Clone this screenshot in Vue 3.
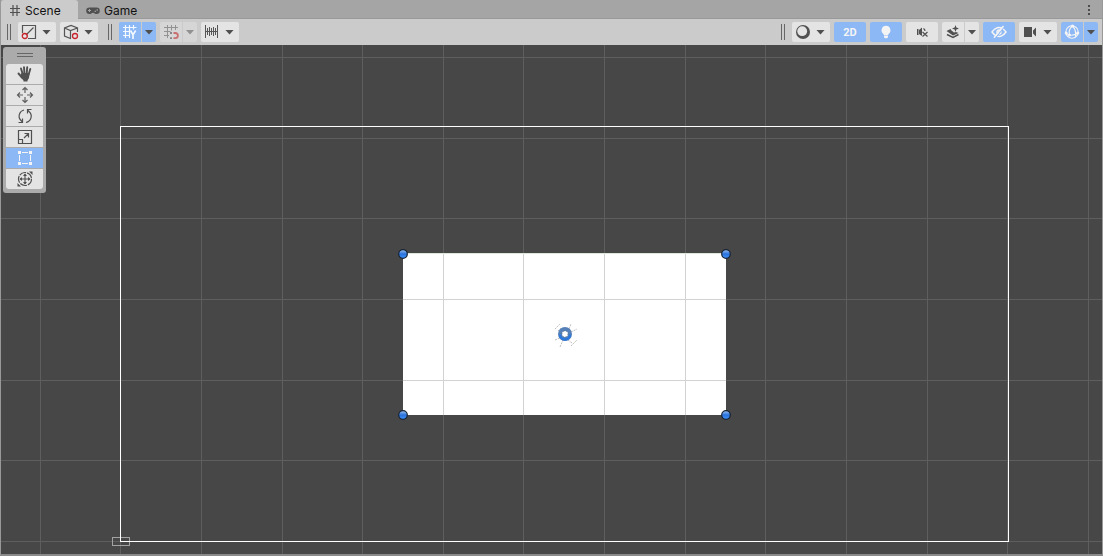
<script setup>
import { ref } from 'vue'

const activeTool = ref('rect')
const tools = [
  { id: 'hand', label: 'View Tool' },
  { id: 'move', label: 'Move Tool' },
  { id: 'rotate', label: 'Rotate Tool' },
  { id: 'scale', label: 'Scale Tool' },
  { id: 'rect', label: 'Rect Tool' },
  { id: 'transform', label: 'Transform Tool' }
]
const columns = [40, 120, 201, 282, 362, 443, 523, 604, 685, 765, 846, 927, 1007, 1088]
const rows = [57, 138, 218, 299, 380, 460, 541]
const handles = [[403, 254], [726, 254], [403, 415], [726, 415]]
</script>

<template>
  <div class="window">
    <header class="tabs">
      <button class="tab current" type="button">
        <svg class="tab-icon" viewBox="0 0 12 12"><path d="M4 0v11M8 0v11M1 3.500h10M1 7.500h10" fill="none" stroke="#505050" stroke-width="1.200" /></svg>
        Scene
      </button>
      <button class="tab" type="button">
        <svg class="pad-icon" viewBox="0 0 14 12"><path d="M3.500 2.500h7a3.300 3.300 0 0 1 0 6.600C8.800 9.100 8.500 7.700 7 7.700S5.200 9.100 3.500 9.100a3.300 3.300 0 0 1 0-6.600z" fill="#505050" /><path d="M3.500 4v3M2 5.500h3" stroke="#a5a5a5" /><circle cx="9.300" cy="6.300" r=".8" fill="#a5a5a5" /><circle cx="11.200" cy="5" r=".8" fill="#a5a5a5" /></svg>
        Game
      </button>
      <button class="kebab" type="button" aria-label="Scene options">
        <svg viewBox="0 0 4 12"><path d="M1 1h2v2H1zM1 5h2v2H1zM1 9h2v2H1z" fill="#4c4c4c" /></svg>
      </button>
    </header>

    <div class="toolbar">
      <div class="group">
        <i class="grip"></i>
        <button class="btn" type="button" aria-label="Pivot mode">
          <svg class="icon" viewBox="0 0 16 16" fill="none"><path d="M1.500 9V1.500h13v13H7M5 11l7.500-7.500" stroke="#555" stroke-width="1.200" /><circle cx="3.800" cy="12" r="2.500" stroke="#c8232c" stroke-width="1.300" /></svg>
          <i class="arrow"></i>
        </button>
        <button class="btn" type="button" aria-label="Pivot rotation">
          <svg class="icon" viewBox="0 0 16 16" fill="none"><path d="M8 14.700 1.500 12V4L8 1.500 14.500 4v4M1.500 4l6 2.500 7-2.500M7.500 6.500v8" stroke="#555" stroke-width="1.200" /><circle cx="12" cy="12" r="2.500" stroke="#c8232c" stroke-width="1.300" /></svg>
          <i class="arrow"></i>
        </button>
      </div>
      <div class="group">
        <i class="grip"></i>
        <div class="split on">
          <button class="part" type="button" aria-label="Grid visibility">
            <svg class="icon" viewBox="0 0 16 16" fill="none" stroke="#f4f8ff"><path d="M3.500 1v13M7.500 1v13M11.500 1v4.500M1 3.500h13.500M1 7.500h6.500M1 11.500h7" stroke-width="1.200" /><path d="m8.500 6.500 2.500 4.200 2.700-4.200M11 10.500V15" stroke-width="1.700" /></svg>
          </button>
          <button class="part drop" type="button" aria-label="Grid settings"><i class="arrow"></i></button>
        </div>
        <div class="split off">
          <button class="part" type="button" aria-label="Grid snapping" disabled>
            <svg class="icon" viewBox="0 0 16 16" fill="none"><path d="M4.500 1v13M8.500 1v5.500M12.500 1v5M1 3.500h14M1 7.500h6.500M1 11.500h5" stroke="#929292" /><path d="M10.500 9h1.800a2.600 2.600 0 0 1 0 5.200H10.500" stroke="#c96f70" stroke-width="1.800" /><path d="M7 9h2M7 14.200h2" stroke="#858585" stroke-width="1.800" /></svg>
          </button>
          <button class="part drop" type="button" aria-label="Snapping settings" disabled><i class="arrow"></i></button>
        </div>
        <button class="btn" type="button" aria-label="Snap increment">
          <svg class="icon" viewBox="0 0 16 16"><path d="M1.500 1v13M13.500 1v13M3.500 4v7M5.500 3v9M7.500 4v7M9.500 3v9M11.500 4v7M1 7.500h13" fill="none" stroke="#555" /></svg>
          <i class="arrow"></i>
        </button>
      </div>

      <div class="group end">
        <i class="grip"></i>
        <button class="btn" type="button" aria-label="Draw mode">
          <svg class="icon" viewBox="0 0 16 16"><circle cx="8" cy="8" r="7" fill="#505050" /><circle cx="7.200" cy="7.200" r="4.900" fill="#e4e4e4" /></svg>
          <i class="arrow"></i>
        </button>
        <button class="btn wide on" type="button">2D</button>
        <button class="btn wide on" type="button" aria-label="Scene lighting">
          <svg class="icon" viewBox="0 0 16 16"><path d="M8 1.700a4.500 4.500 0 0 1 2.500 8.200L10 11.500H6l-.5-1.600A4.500 4.500 0 0 1 8 1.700zM6 12h4v1.200L9 14.300H7l-1-1.100z" fill="#f4f4f4" /></svg>
        </button>
        <button class="btn wide" type="button" aria-label="Scene audio">
          <svg class="icon" viewBox="0 0 16 16"><path d="M3 5h1.500v6H3zM5 6l3-2.500V12L5 10z" fill="#505050" /><path d="M9.500 4.500q1.500 1 1.500 2.500M8.500 8l5 4.500m0-4.500-5 4.500" fill="none" stroke="#505050" stroke-width="1.200" /></svg>
        </button>
        <div class="split">
          <button class="part" type="button" aria-label="Effects">
            <svg class="icon" viewBox="0 0 16 16"><path d="m1.500 7 4-2 1 1.500 2.500 2L11 8l2.500 1L8 11.500z" fill="#505050" /><path d="m2 10.500 6 3 5.500-3" fill="none" stroke="#505050" stroke-width="1.500" /><path d="m10.500 1 .9 2.600 2.600.9-2.600.9-.9 2.600-.9-2.600L7 4.500l2.600-.9z" fill="#505050" /></svg>
          </button>
          <button class="part drop" type="button" aria-label="Effect settings"><i class="arrow"></i></button>
        </div>
        <button class="btn wide on" type="button" aria-label="Scene visibility">
          <svg class="icon" viewBox="0 0 16 16" fill="none" stroke="#f4f4f4"><path d="M1 8q3.500-4.500 7-4.500T15 8q-3.500 4.500-7 4.500T1 8z" stroke-width="1.500" /><circle cx="8" cy="8" r="2" stroke-width="1.500" /><path d="m4.500 14 9-11.500" stroke="#8cb8f5" stroke-width="1.200" /><path d="m3 13.800 9.500-11.800" stroke-width="1.500" /></svg>
        </button>
        <button class="btn" type="button" aria-label="Scene camera">
          <svg class="icon" viewBox="0 0 16 16"><path d="M2 3h8v10H2zM11 6.500 14 3.500v9l-3-3z" fill="#505050" /></svg>
          <i class="arrow"></i>
        </button>
        <div class="split on">
          <button class="part" type="button" aria-label="Gizmos">
            <svg class="icon" viewBox="0 0 16 16"><g fill="none" stroke="#f4f4f4" stroke-width="1.100"><circle cx="8" cy="8" r="6.200" /><path d="M8.500 2Q4 5.500 5.500 11M8.500 2q4 4 3 11.500M2 9.500l3.500 1.500q4 1 8.500-2" /></g><g fill="#f4f4f4"><circle cx="8.500" cy="2" r="1.600" /><circle cx="2.200" cy="9" r="1.500" /><circle cx="13.700" cy="9" r="1.600" /><circle cx="5.500" cy="11" r="1.500" /></g></svg>
          </button>
          <button class="part drop" type="button" aria-label="Gizmo settings"><i class="arrow"></i></button>
        </div>
      </div>
    </div>

    <main class="scene">
      <svg class="view" viewBox="1 45 1101 509" preserveAspectRatio="xMidYMid slice" role="img" aria-label="Scene view">
        <g class="lines">
          <rect v-for="x in columns" :key="'c' + x" :x="x" y="0" width="1" height="600" />
          <rect v-for="y in rows" :key="'r' + y" x="0" :y="y" width="1103" height="1" />
        </g>
        <rect x="112.500" y="537.500" width="17" height="8" fill="none" stroke="#a3a3a3" />
        <rect x="120.500" y="126.500" width="888" height="415" fill="none" stroke="#fff" />
        <rect x="403" y="253" width="323" height="162" fill="#fff" />
        <g fill="#d2d2d2">
          <rect v-for="x in columns.slice(5, 9)" :key="'p' + x" :x="x" y="253" width="1" height="162" />
          <rect v-for="y in rows.slice(3, 5)" :key="'q' + y" x="403" :y="y" width="323" height="1" />
        </g>
        <rect x="403" y="253" width="323" height="1" fill="#dce8dc" />
        <g fill="none" stroke="#bdbdbd" stroke-dasharray="2 1">
          <path d="m555 329 5-5M569 329l2-5M571 332l6-3M555 340l5-2M560 347l3-7M571 346l6-6M558 331l3-3M568 340l4 3" />
        </g>
        <circle cx="565" cy="334" r="5" fill="#fff" stroke="#5580b8" stroke-width="4" />
        <path d="M560 334.500a5 5 0 0 0 10 0" fill="none" stroke="#2b78dd" stroke-width="2.500" />
        <circle cx="565" cy="334" r="3" fill="none" stroke="#6a7788" stroke-width="1" stroke-dasharray="1 2" />
        <defs>
          <linearGradient id="bead" x1="0" y1="0" x2="0" y2="1"><stop offset="0" stop-color="#9cc5f4" /><stop offset=".5" stop-color="#2b72dc" /><stop offset="1" stop-color="#3d93ff" /></linearGradient>
        </defs>
        <circle v-for="(h, i) in handles" :key="i" :cx="h[0]" :cy="h[1]" r="4.300" fill="url(#bead)" stroke="#172335" stroke-width="1.200" />
      </svg>

      <div class="tools" role="toolbar" aria-label="Tools">
        <i class="handle"></i>
        <button v-for="t in tools" :key="t.id" type="button" class="tool" :class="{ active: t.id === activeTool }" :aria-label="t.label" @click="activeTool = t.id">
          <svg v-if="t.id === 'hand'" class="tool-icon" viewBox="0 0 18 18"><g fill="none" stroke="#505050" stroke-width="1.900" stroke-linecap="round"><path d="M5 3.500l1.800 6M8 2.200 8.500 9M11.200 2.200 10.700 9M14.300 4 12.500 10M2.500 8.500l3.500 4" /></g><path d="M5.500 8h8l-.5 5-1.500 2.500V16.500h-4v-1L4 11.500z" fill="#505050" /></svg>
          <svg v-else-if="t.id === 'move'" class="tool-icon" viewBox="0 0 18 18"><path d="M9 1.500V7M9 11v5.500M1.500 9H7M11 9h5.500M6.500 4 9 1.500 11.500 4M6.500 14 9 16.500l2.500-2.500M4 6.500 1.500 9 4 11.500M14 6.500 16.500 9 14 11.500" fill="none" stroke="#5f5f5f" stroke-width="1.200" /></svg>
          <svg v-else-if="t.id === 'rotate'" class="tool-icon" viewBox="0 0 18 18"><path d="M8 3a6.200 6.200 0 0 0-3 10.500l1.500 2M10 15.500A6.300 6.300 0 0 0 13 4.500L11.500 3M2.500 15.500h4v-4M15.500 2.500h-4v4" fill="none" stroke="#505050" stroke-width="1.200" /></svg>
          <svg v-else-if="t.id === 'scale'" class="tool-icon" viewBox="0 0 18 18"><path d="M2.500 2.500h13v13h-13zM2.500 11.500h4v4M8 10l4.500-4.500M8.500 5.500h4v4" fill="none" stroke="#505050" stroke-width="1.200" /></svg>
          <svg v-else-if="t.id === 'rect'" class="tool-icon" viewBox="0 0 18 18"><path d="M3.500 6v6M14.500 6v6M6 3.500h6M6 14.500h6" stroke="#f4f4f4" /><path d="M2 2h3v3H2zM13 2h3v3h-3zM2 13h3v3H2zM13 13h3v3h-3z" fill="#f4f4f4" /></svg>
          <svg v-else class="tool-icon" viewBox="0 0 18 18"><circle cx="9" cy="9" r="6.500" fill="none" stroke="#505050" stroke-width="1.200" stroke-dasharray="7 1" /><path d="M9 4v10M4 9h10" stroke="#505050" stroke-width="1.100" /><path d="M9 3.500 7 6h4zM9 14.500 7 12h4zM3.500 9 6 7v4zM14.500 9 12 7v4zM16.500 1.500v3.500L13 1.500zM1.500 16.500V13L5 16.500z" fill="#505050" /></svg>
        </button>
      </div>
    </main>
  </div>
</template>

<style>
body { margin: 0; }
</style>

<style scoped>
.window {
  box-sizing: border-box;
  height: 100vh;
  display: flex;
  flex-direction: column;
  background: #8a8a8a;
  border: solid #999;
  border-width: 0 1px 2px;
  border-bottom-color: #8a8a8a;
  font-family: Inter, "Liberation Sans", sans-serif;
  color: #111;
}
button { margin: 0; padding: 0; border: 0; background: none; font: inherit; color: inherit; }
svg { display: block; flex: none; }
.tabs {
  display: flex;
  height: 19px;
  background: #a5a5a5;
  box-shadow: inset 0 -1px #999;
}
.tab {
  display: flex;
  align-items: center;
  gap: 4px;
  padding: 2px 8px 0;
  font-size: 12px;
  line-height: 17px;
}
.tab.current { width: 77px; background: #cbcbcb; border-radius: 3px 3px 0 0; }
.tab-icon { width: 12px; height: 12px; }
.pad-icon { width: 14px; height: 12px; }
.kebab { margin-left: auto; padding: 0 11px; }
.kebab svg { width: 4px; height: 12px; }
.toolbar {
  display: flex;
  gap: 10px;
  height: 26px;
  box-sizing: border-box;
  padding: 3px 4px 3px 6px;
  background: #cbcbcb;
}
.group { display: flex; align-items: center; gap: 4px; }
.end { margin-left: auto; }
.grip {
  box-sizing: border-box;
  width: 4px;
  height: 16px;
  margin-right: 3px;
  border: solid #666;
  border-width: 0 1px;
}
.btn {
  display: flex;
  align-items: center;
  gap: 5px;
  height: 20px;
  padding: 0 5px 0 3px;
  border-radius: 2px;
  background: #e4e4e4;
}
.wide {
  width: 32px;
  padding: 0;
  justify-content: center;
  font: bold 11px Roboto, sans-serif;
}
.btn.on { background: #8cb8f5; color: #f4f4f4; }
.icon { width: 16px; height: 16px; }
.arrow {
  width: 9px;
  height: 5px;
  background: #505050;
  clip-path: polygon(0 0, 100% 0, 50% 100%);
}
.split { display: flex; gap: 1px; height: 20px; border-radius: 2px; overflow: hidden; }
.part { display: flex; align-items: center; justify-content: center; width: 22px; background: #e4e4e4; }
.drop { width: 14px; }
.split.on .part { background: #8cb8f5; }
.split.off .part { background: #d6d6d6; }
.split.off .arrow { background: #929292; }
.scene { position: relative; flex: 1; min-height: 0; background: #474747; overflow: hidden; }
.view { width: 100%; height: 100%; }
.lines { fill: #5e5e5e; }
.tools {
  position: absolute;
  left: 2px;
  top: 2px;
  display: flex;
  flex-direction: column;
  gap: 1px;
  padding: 0 3px 4px;
  border-radius: 3px;
  background: #ababab;
}
.handle {
  box-sizing: border-box;
  width: 16px;
  height: 4px;
  margin: 6px auto;
  border: solid #666;
  border-width: 1px 0;
}
.tool {
  display: flex;
  align-items: center;
  justify-content: center;
  width: 37px;
  height: 20px;
  background: #e4e4e4;
}
.tool:nth-of-type(1) { border-radius: 3px 3px 0 0; }
.tool:last-child { border-radius: 0 0 3px 3px; }
.tool.active { background: #8cb8f5; }
.tool-icon { width: 18px; height: 18px; }
</style>
